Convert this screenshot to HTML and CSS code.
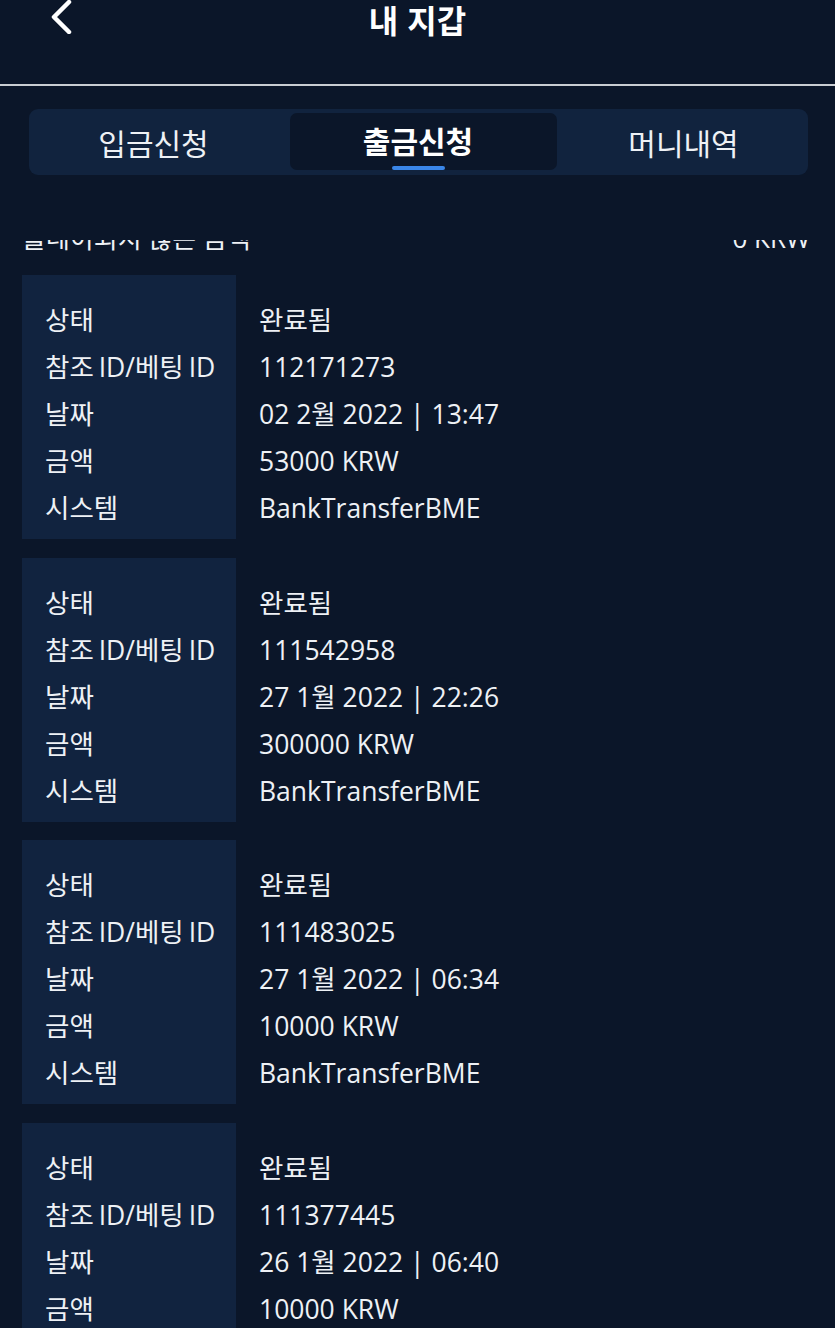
FILE: index.html
```html
<!DOCTYPE html>
<html lang="ko">
<head>
    <meta charset="UTF-8">
    <meta name="viewport" content="width=device-width,initial-scale=1.0">
    <title>내 지갑</title>
    <link rel="stylesheet" href="styles.css">
</head>
<body>
    <header class="topbar">
        <a class="back" href="#" aria-label="뒤로">
            <svg width="24" height="34" viewBox="0 0 24 34"><path d="M20 2 L5 17 L20 32" fill="none" stroke="#fff" stroke-width="4.5" stroke-linecap="round" stroke-linejoin="round"/></svg>
        </a>
        <h1>내 지갑</h1>
    </header>

    <nav class="tabs">
        <a class="tab" href="#"><span>입금신청</span></a>
        <a class="tab active" href="#"><span>출금신청</span><i class="bar"></i></a>
        <a class="tab" href="#"><span>머니내역</span></a>
    </nav>

    <section class="list">
        <div class="scroll">
            <div class="summary"><span>플레이되지 않은 금액</span><span>0 KRW</span></div>

            <div class="card">
                <dl class="labels"><dt>상태</dt><dt>참조 ID/베팅 ID</dt><dt>날짜</dt><dt>금액</dt><dt>시스템</dt></dl>
                <dl class="values"><dd>완료됨</dd><dd>112171273</dd><dd>02 2월 2022 | 13:47</dd><dd>53000 KRW</dd><dd>BankTransferBME</dd></dl>
            </div>

            <div class="card">
                <dl class="labels"><dt>상태</dt><dt>참조 ID/베팅 ID</dt><dt>날짜</dt><dt>금액</dt><dt>시스템</dt></dl>
                <dl class="values"><dd>완료됨</dd><dd>111542958</dd><dd>27 1월 2022 | 22:26</dd><dd>300000 KRW</dd><dd>BankTransferBME</dd></dl>
            </div>

            <div class="card">
                <dl class="labels"><dt>상태</dt><dt>참조 ID/베팅 ID</dt><dt>날짜</dt><dt>금액</dt><dt>시스템</dt></dl>
                <dl class="values"><dd>완료됨</dd><dd>111483025</dd><dd>27 1월 2022 | 06:34</dd><dd>10000 KRW</dd><dd>BankTransferBME</dd></dl>
            </div>

            <div class="card">
                <dl class="labels"><dt>상태</dt><dt>참조 ID/베팅 ID</dt><dt>날짜</dt><dt>금액</dt><dt>시스템</dt></dl>
                <dl class="values"><dd>완료됨</dd><dd>111377445</dd><dd>26 1월 2022 | 06:40</dd><dd>10000 KRW</dd><dd>BankTransferBME</dd></dl>
            </div>
        </div>
    </section>
</body>
</html>
```

FILE: styles.css
```css
html, body { height: 100%; }
body { margin: 0; background: #0b1629; color: #eef1f5; font-family: "Open Sans", "Noto Sans CJK KR", sans-serif; overflow: hidden; }

.topbar { height: 84px; border-bottom: 2px solid #c9cdd2; display: flex; justify-content: center; align-items: flex-start; }
.topbar h1 { margin: 0; font-family: "Noto Sans CJK KR", sans-serif; font-size: 32px; font-weight: 700; line-height: 38px; color: #fff; }
.back { position: absolute; left: 49px; top: 0; display: block; }

.tabs { display: grid; grid-template-columns: 257px 267px 1fr; margin: 23px 27px 0 29px; height: 66px; padding: 4px; box-sizing: border-box; background: #11233e; border-radius: 9px; }
.tab { display: flex; flex-direction: column; align-items: center; justify-content: center; text-decoration: none; color: #eef1f5; font-family: "Noto Sans CJK KR", sans-serif; font-size: 30px; border-radius: 7px; height: 57px; }
.tab:first-child { padding-right: 16px; }
.tab:last-child { padding-left: 6px; }
.tab span { line-height: 52px; }
.tab.active { background: #0b1629; font-weight: 700; color: #fff; justify-content: flex-end; padding-right: 11px; }
.tab.active .bar { display: block; width: 53px; height: 4px; border-radius: 2px; background: #3a86e8; }

.list { margin-top: 65px; height: 1200px; overflow: hidden; }
.scroll { margin-top: -22px; padding: 0 25px 0 22px; }

.summary { display: flex; justify-content: space-between; height: 40px; line-height: 40px; font-size: 26px; }

.card { display: flex; height: 264px; margin-top: 18.67px; }
.summary + .card { margin-top: 17px; }
.card dl { margin: 0; padding: 22px 0 7px 23px; font-size: 26.5px; }
.card dt, .card dd { margin: 0; line-height: 47px; white-space: nowrap; }
.labels { width: 214px; box-sizing: border-box; background: #11233f; word-spacing: -2px; }
.values { flex: 1; }
```
